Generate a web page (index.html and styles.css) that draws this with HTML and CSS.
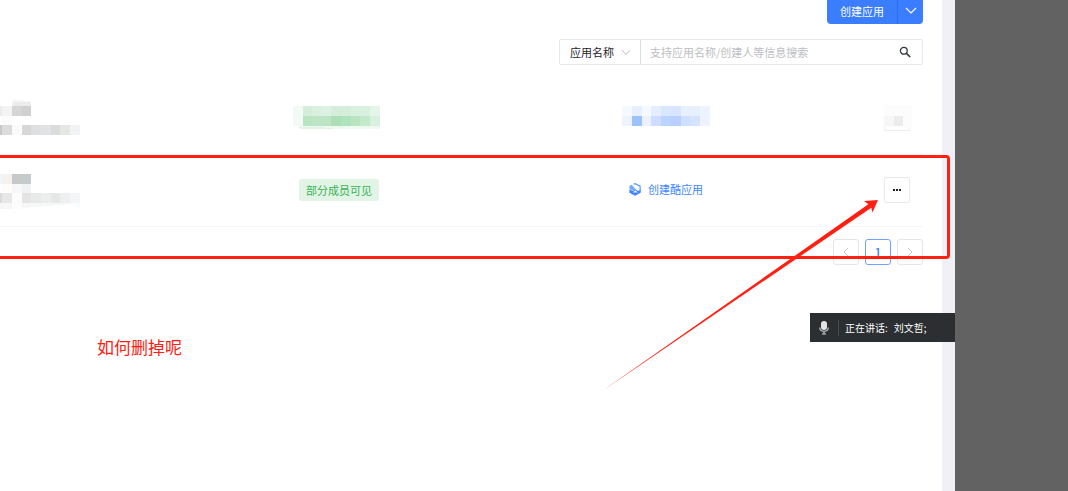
FILE: index.html
```html
<!DOCTYPE html>
<html lang="zh-CN">
<head>
<meta charset="utf-8">
<title>应用列表</title>
<link rel="stylesheet" href="styles.css">
</head>
<body>
<main class="panel">
  <header class="toolbar">
    <div class="create">
      <button class="create-main" type="button">创建应用</button>
      <button class="create-more" type="button" aria-label="更多创建方式">
        <svg width="12" height="8" viewBox="0 0 12 8" fill="none" stroke="#fff" stroke-width="1.2"><path d="M1 1l5 5 5-5"/></svg>
      </button>
    </div>
    <form class="search">
      <label class="field">
        <select class="field-select" aria-label="搜索字段"><option>应用名称</option></select>
        <svg class="field-arrow" width="10" height="7" viewBox="0 0 10 7" fill="none" stroke="#bfbfbf"><path d="M1 1l4 4.500 4-4.500"/></svg>
      </label>
      <input class="search-input" type="text" aria-label="搜索" placeholder="支持应用名称/创建人等信息搜索">
      <button class="search-button" type="button" aria-label="搜索">
        <svg width="12" height="12" viewBox="0 0 12 12" fill="none" stroke="#333840" stroke-width="1.300"><circle cx="4.800" cy="4.800" r="3.400"/><path d="M7.300 7.300l3.900 3.700" stroke-width="1.600"/></svg>
      </button>
    </form>
  </header>

  <table class="apps">
    <colgroup><col class="col-name"><col class="col-scope"><col><col class="col-action"></colgroup>
    <tbody>
      <tr>
        <td>
          <svg class="mosaic" width="80" height="40" shape-rendering="crispEdges">
            <path fill="#f6f6f6" d="M12 2h9l10 2v4H12z"/><path fill="#ececec" d="M13 4h18v4H13z"/>
            <path fill="#ececec" d="M0 8h2v10H0z"/><path fill="#f6f4f3" d="M2 8h10v10H2z"/><path fill="#d5d5d6" d="M12 8h10v10H12z"/><path fill="#ced0d2" d="M22 8h9v10h-9z"/>
            <path fill="#fcfcfc" d="M2 18h10v9H2z"/>
            <path fill="#c9c9c9" d="M0 27h2v10H0z"/><path fill="#dcdcdc" d="M2 27h10v10H2z"/><path fill="#fafafa" d="M12 27h9v10h-9z"/><path fill="#d7d7d8" d="M22 27h9v10h-9z"/><path fill="#dfe0e2" d="M31 27h10v10H31z"/><path fill="#e1e2e3" d="M41 27h10v10H41z"/><path fill="#dadcdc" d="M51 27h9v10h-9z"/><path fill="#e6e6e5" d="M60 27h10v10H60z"/><path fill="#f2f3f5" d="M70 27h10v10H70z"/>
          </svg>
        </td>
        <td>
          <svg class="mosaic" width="88" height="24" shape-rendering="crispEdges">
            <path fill="#f3faf5" d="M0 0h10v20H0z"/><path fill="#d5eedb" d="M10 0h9v10h-9zM38 0h20v10H38z"/><path fill="#d9f0de" d="M19 0h9v10h-9zM58 0h19v10H58z"/><path fill="#ddf2e2" d="M28 0h10v10H28z"/><path fill="#e5f5e9" d="M77 0h10v10H77z"/>
            <path fill="#b8e4c0" d="M10 10h9v10h-9zM58 10h9v10h-9z"/><path fill="#bce4c5" d="M19 10h19v10H19z"/><path fill="#addeb6" d="M38 10h10v10H38z"/><path fill="#aee3bf" d="M48 10h10v10H48z"/><path fill="#c3e8cb" d="M67 10h10v10H67z"/><path fill="#d8f0de" d="M77 10h10v10H77z"/>
            <path fill="#eff8f1" d="M6 20h81v3H7z"/><path fill="#dff2e4" d="M6 21h17l17 1v1H7z"/>
          </svg>
        </td>
        <td>
          <svg class="mosaic" width="88" height="24" shape-rendering="crispEdges">
            <path fill="#f6f9ff" d="M0 0h10v10H0zM20 0h9v10h-9z"/><path fill="#e6f0ff" d="M10 0h10v10H10zM68 0h10v10H68z"/><path fill="#e6edff" d="M29 0h10v10H29z"/><path fill="#dae8ff" d="M39 0h10v10H39z"/><path fill="#d9e4ff" d="M49 0h10v10H49z"/><path fill="#e8f0ff" d="M59 0h9v10h-9z"/><path fill="#eef4ff" d="M78 0h10v20H78zM0 10h10v10H0z"/>
            <path fill="#9bc2ff" d="M10 10h10v10H10z"/><path fill="#edf0ff" d="M20 10h9v10h-9z"/><path fill="#cddcff" d="M29 10h10v10H29z"/><path fill="#b8d4ff" d="M39 10h10v10H39z"/><path fill="#bacfff" d="M49 10h10v10H49z"/><path fill="#cfdfff" d="M59 10h9v10h-9z"/><path fill="#d4e4ff" d="M68 10h10v10H68z"/>
          </svg>
        </td>
        <td>
          <svg class="mosaic" width="28" height="26" shape-rendering="crispEdges">
            <path fill="#fcfcfc" d="M0 0h28v22H0z"/><path fill="#f7f7f7" d="M0 11h10v10H0z"/><path fill="#ececed" d="M10 11h9v10h-9z"/>
            <path fill="none" stroke="#ededee" d="M.500 22v3.500h25V22"/>
          </svg>
        </td>
      </tr>
      <tr>
        <td>
          <svg class="mosaic" width="80" height="40" shape-rendering="crispEdges">
            <path fill="#f0f6f8" d="M0 4h2v10H0z"/><path fill="#f4f2ef" d="M2 4h10v10H2z"/><path fill="#c8c8c9" d="M12 4h10v10H12z"/><path fill="#c5cacd" d="M22 4h9v10h-9z"/>
            <path fill="#fefdfa" d="M2 14h10v9H2z"/><path fill="#f7f7f7" d="M12 14h10v9H12z"/><path fill="#f1f2f3" d="M22 14h9v9h-9z"/>
            <path fill="#dadada" d="M0 23h2v10H0z"/><path fill="#e7e7e7" d="M2 23h10v10H2z"/><path fill="#fcfcfc" d="M12 23h10v16H12z"/><path fill="#e6e4e2" d="M22 23h9v10h-9z"/><path fill="#e7e9eb" d="M31 23h10v10H31z"/><path fill="#eceeee" d="M41 23h10v10H41z"/><path fill="#e5e8e7" d="M51 23h9v10h-9z"/><path fill="#eeefef" d="M60 23h10v10H60z"/><path fill="#f2f6f6" d="M70 23h10v10H70z"/>
            <path fill="#f6f8f7" d="M0 33h12v6H0zM22 33h48v1l-22 2-26 2z"/><path fill="#f9fcfe" d="M70 33h10v5l-10-3z"/>
          </svg>
        </td>
        <td><span class="scope">部分成员可见</span></td>
        <td>
          <a class="cool" href="#">
            <svg width="12" height="13" viewBox="0 0 12 13"><path d="M.400 6.200L3.500 8 6.500 6.200 9 8l2.700-1.200v3L6 12.800.400 9.800z" fill="#3b82ff"/><path d="M4.600 1.200L6.200.700l4.900 2.500v5" fill="none" stroke="#5b98ff" stroke-width="1.200"/><path d="M.500 2.800l2.200-1.100 4.300 4.800-3 1.300L.500 6z" fill="#76aaff"/><path d="M3.800 9.600L6.300 7.300 9 9.600z" fill="#e8f1ff"/></svg>
            创建酷应用
          </a>
        </td>
        <td>
          <button class="more" type="button" aria-label="更多操作">
            <svg width="10" height="4" viewBox="0 0 10 4" fill="#1f2329"><path d="M1 1h2v2H1zM4 1h2v2H4zM7 1h2v2H7z"/></svg>
          </button>
        </td>
      </tr>
    </tbody>
  </table>

  <nav class="pages" aria-label="分页">
    <button class="page" type="button" aria-label="上一页"><svg width="6" height="10" viewBox="0 0 6 10" fill="none" stroke="#c4c4c4"><path d="M5 1L1 5l4 4"/></svg></button>
    <button class="page page-current" type="button">1</button>
    <button class="page" type="button" aria-label="下一页"><svg width="6" height="10" viewBox="0 0 6 10" fill="none" stroke="#c4c4c4"><path d="M1 1l4 4-4 4"/></svg></button>
  </nav>
</main>
<div class="gutter"></div>
<aside class="backdrop"></aside>

<div class="speaker">
  <svg width="10" height="14" viewBox="0 0 10 14"><rect x="2" y="0" width="6" height="9" rx="3" fill="#e4e4e4"/><path d="M.700 6.500c.300 5 8.300 5 8.600 0M5 10.500V13M3 13h4" fill="none" stroke="#c8c8c8" stroke-width="1.200"/></svg>
  <span class="speaker-label">正在讲话:</span>
  <span>刘文哲;</span>
</div>
<div class="mark-box"></div>
<svg class="mark-arrow" width="278" height="194" viewBox="0 0 278 194"><path fill="#ff2012" d="M2 190.500L267.300 4.200 263 1 277 0 271.500 12.500 270.300 7.800z"/></svg>
<p class="mark-text">如何删掉呢</p>
</body>
</html>
```
FILE: styles.css
```css
* { box-sizing: border-box; }

body {
  position: relative;
  display: flex;
  min-height: 100vh;
  margin: 0;
  background: #fff;
  color: #1f2329;
  font: 11px/16px "Noto Sans CJK SC", sans-serif;
}

button, input, select { font: inherit; color: inherit; }
button { display: flex; align-items: center; justify-content: center; padding: 0; cursor: pointer; }
svg { display: block; flex: none; }

.panel { flex: 1; min-width: 0; padding-right: 19px; }
.gutter { width: 13px; background: #f0f0f6; }
.backdrop { width: 113px; background: #626262; }

.toolbar { display: flex; flex-direction: column; align-items: flex-end; gap: 15px; }
.create { display: flex; overflow: hidden; border-radius: 0 0 4px 4px; }
.create button { height: 24px; padding-bottom: 2px; border: 0; background: #3a7eff; color: #fff; }
.create .create-main { width: 71px; border-right: 1px solid #2e6ce8; }
.create-more { width: 25px; }

.search { display: flex; width: 364px; height: 26px; border: 1px solid #e8e9eb; border-radius: 2px; }
.field { position: relative; display: flex; width: 81px; border-right: 1px solid #dcdde0; }
.field-select { width: 100%; padding: 0 10px; border: 0; background: transparent; appearance: none; }
.field-arrow { position: absolute; top: 9px; right: 9px; pointer-events: none; }
.search-input { flex: 1; min-width: 0; padding: 0 9px; border: 0; background: transparent; outline: 0; }
.search-input::placeholder { color: #bcbec2; opacity: 1; }
.search-button { width: 34px; border: 0; background: transparent; }

.apps { width: 100%; margin-top: 17px; border-collapse: collapse; table-layout: fixed; }
.apps td { height: 72px; padding: 0; border-bottom: 1px solid #f6f6f7; vertical-align: middle; }
.col-name { width: 293px; }
.col-scope { width: 329px; }
.col-action { width: 39px; }
.scope { display: inline-block; margin-left: 6px; padding: 3px 7px; border-radius: 3px; background: #e2f4e6; color: #37b354; }
.cool { display: inline-flex; align-items: center; gap: 7px; margin-left: 7px; color: #4088ff; text-decoration: none; }
.more { width: 26px; height: 26px; border: 1px solid #e8e9eb; border-radius: 2px; background: #fff; }

.pages { display: flex; justify-content: flex-end; gap: 6px; margin-top: 12px; }
.page { width: 26px; height: 26px; border: 1px solid #e5e5e6; border-radius: 3px; background: #fff; }
.page-current { border-color: #6fa3ff; color: #3a7eff; font-size: 12px; font-weight: 500; }

.speaker {
  position: absolute;
  top: 313px;
  right: 113px;
  display: flex;
  align-items: center;
  width: 145px;
  height: 29px;
  padding-left: 9px;
  background: #2b2f32;
  color: #fff;
  font-size: 10px;
}
.speaker-label { margin: 0 6px 0 9px; padding-left: 6px; border-left: 1px solid #484c4f; }

.mark-box {
  position: absolute;
  top: 155px;
  left: 0;
  right: 118px;
  height: 104px;
  border: 3px solid #ff2012;
  border-left: 0;
  border-radius: 0 4px 4px 0;
  pointer-events: none;
}
.mark-arrow { position: absolute; top: 200px; right: 189px; pointer-events: none; }
.mark-text { position: absolute; top: 335px; left: 97px; margin: 0; color: #ff2012; font-size: 17px; line-height: 24px; }
```
